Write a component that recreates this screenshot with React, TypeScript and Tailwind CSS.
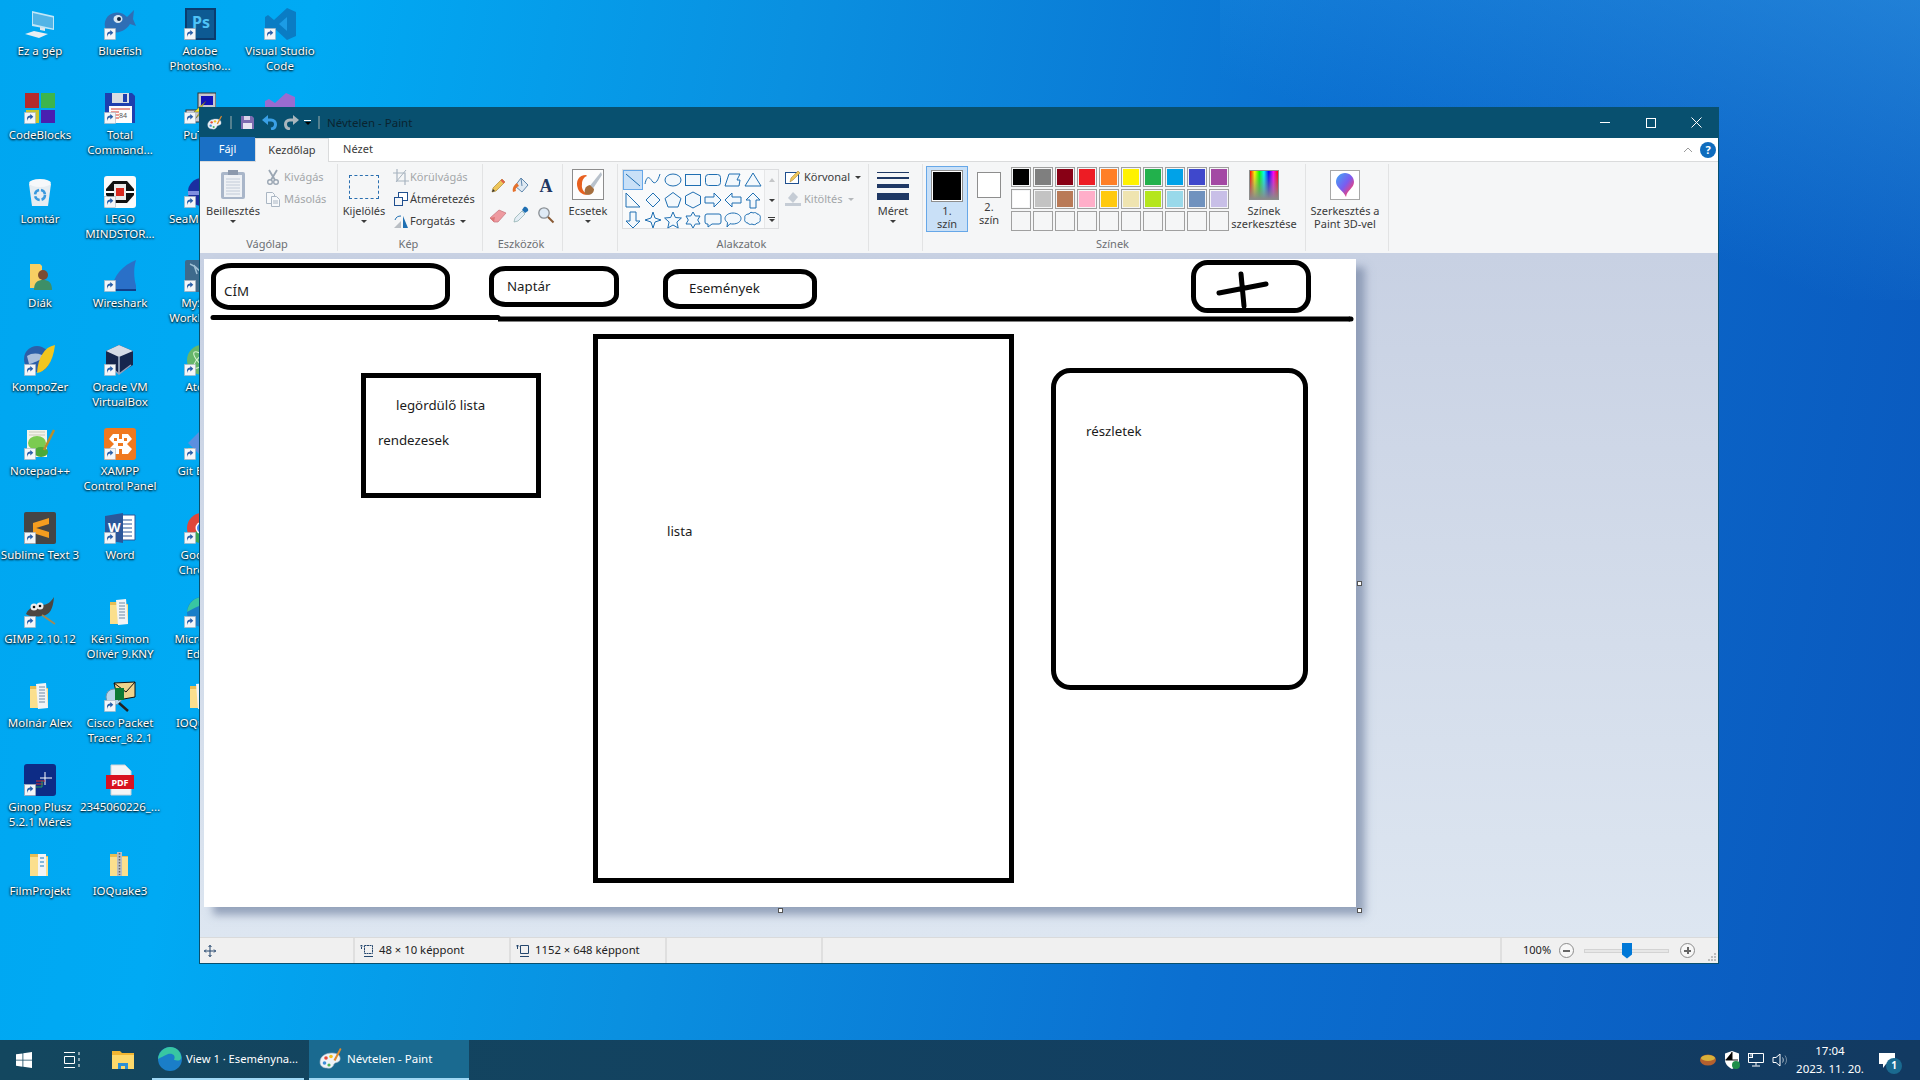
import React from 'react';

const FONT = "font-['Noto_Sans',sans-serif]";

const Shortcut = () => (
  <g>
    <rect x="0.5" y="20.5" width="11" height="11" fill="#f4f6f8" stroke="#aab4c0" strokeWidth="0.6" />
    <path d="M3 29v-2.5c0-2 1.4-3 3.3-3V22l3 2.7-3 2.7v-1.8c-1.5 0-2.5.8-3.3 3.4z" fill="#2a5fa8" />
  </g>
);

const Folder = ({ children }: { children?: React.ReactNode }) => (
  <>
    <path d="M6 6h8l2 2h8v20H6z" fill="#e8bd55" />
    <path d="M6 9h18v19H6z" fill="#fbdf8d" />
    {children}
  </>
);

const desktopArt: Record<string, React.ReactNode> = {
  pc: (
    <>
      <path d="M8 3l22 5v14L8 18z" fill="#bfe6f7" />
      <path d="M9 5l20 4.500v11L9 16z" fill="#52b4e6" />
      <path d="M16 19l5 1v3l-5-1z" fill="#dfe8ee" />
      <path d="M1 26l9-3 14 3-9 4z" fill="#e9eef2" />
    </>
  ),
  bluefish: (
    <>
      <path d="M1 14C3 4 16 1 23 9l7-7-1 9 3 7-6-2c-5 8-14 10-22 8C2 22 0 18 1 14z" fill="#2f6eb5" />
      <ellipse cx="14" cy="11" rx="4.500" ry="4" fill="#d8e6f2" />
      <circle cx="15" cy="11" r="2" fill="#10243c" />
    </>
  ),
  ps: (
    <>
      <rect x="1" y="0" width="31" height="32" fill="#0a3c6e" />
      <rect x="3" y="2" width="27" height="28" fill="#0d5a93" />
      <text x="8" y="20" fontSize="16" fontWeight="700" fill="#4fc3f7" fontFamily="Noto Sans, sans-serif">Ps</text>
    </>
  ),
  vscode: (
    <>
      <path d="M23 0l9 4v24l-9 4-13-12-6 5-3-2V9l3-2 6 5z" fill="#0a7cc4" />
      <path d="M23 9v14l-8-7z" fill="#1c9ce6" />
    </>
  ),
  codeblocks: (
    <>
      <path d="M1 1h14v15H1z" fill="#b52a2a" />
      <path d="M17 1h14v15H17z" fill="#3db54a" />
      <path d="M2 18h13v13H2z" fill="#c9c52f" />
      <path d="M17 18h14v13H17z" fill="#4a1fb0" />
    </>
  ),
  total: (
    <>
      <path d="M1 1h27l3 3v27H1z" fill="#1e3fae" />
      <rect x="8" y="1" width="17" height="10" fill="#d9dde2" />
      <rect x="19" y="2" width="4" height="8" fill="#1e3fae" />
      <rect x="5" y="14" width="23" height="17" fill="#fdfdfd" />
      <path d="M7 17h19M7 20h8M7 23h8M7 26h8" stroke="#d8382f" strokeWidth="1" />
      <text x="15" y="26" fontSize="7" fill="#555" fontFamily="Noto Sans, sans-serif">84</text>
    </>
  ),
  putty: (
    <>
      <rect x="14" y="1" width="18" height="15" fill="#c8c8d0" stroke="#333" />
      <rect x="17" y="4" width="12" height="9" fill="#1313b8" />
      <rect x="2" y="18" width="18" height="12" fill="#c8c8d0" stroke="#333" />
      <path d="M22 9L10 20l6 0-5 7 12-11h-6z" fill="#f6ea1f" stroke="#444" strokeWidth="0.5" />
    </>
  ),
  vs: <path d="M22 1l9 4v22l-9 4-11-10-6 4-4-2V9l4-2 6 4z" fill="#9a6bd0" />,
  bin: (
    <>
      <path d="M5 8l22 0-3 22H8z" fill="#e6edf2" />
      <ellipse cx="16" cy="7" rx="11" ry="4" fill="#f6f8fa" />
      <circle cx="16" cy="19" r="5" fill="none" stroke="#3b9ade" strokeWidth="2.500" strokeDasharray="6 2" />
    </>
  ),
  lego: (
    <>
      <rect x="0" y="0" width="32" height="32" rx="3" fill="#fbfbfb" />
      <path d="M9 5h14l7 8v6l-7 8H9l-7-8v-6z" fill="#111" />
      <path d="M2 15h28v2H2z" fill="#fff" />
      <rect x="10" y="8" width="12" height="16" fill="#e9e9e9" />
      <rect x="12" y="12" width="8" height="8" fill="#d8281e" />
    </>
  ),
  seamonkey: (
    <>
      <circle cx="18" cy="16" r="14" fill="#1b2fa0" />
      <path d="M4 15h28v4H4z" fill="#7f8fe0" />
      <circle cx="22" cy="24" r="6" fill="#3bb0d8" />
    </>
  ),
  student: (
    <>
      <path d="M6 4h10l2 2v22H6z" fill="#f7cf63" />
      <circle cx="19" cy="15" r="5" fill="#7a4c33" />
      <path d="M10 30c0-8 4-10 9-10s9 2 9 10z" fill="#3d8f68" />
    </>
  ),
  wireshark: (
    <>
      <path d="M8 29C9 16 19 5 32 0c-3 10-2 20 1 29z" fill="#2a70c8" />
      <path d="M8 29h24v2H8z" fill="#123f8a" />
    </>
  ),
  workbench: (
    <>
      <rect x="1" y="0" width="31" height="32" rx="2" fill="#3e6a8c" />
      <path d="M6 4c6 2 12 8 18 20M10 5l3 9" stroke="#9fc0d4" strokeWidth="1.500" fill="none" />
    </>
  ),
  kompozer: (
    <>
      <circle cx="13" cy="15" r="13" fill="#2c5fa8" />
      <path d="M3 12c6-4 14-3 20 2-8 1-14 6-18 6z" fill="#a9bfdc" />
      <path d="M31 1C20 3 14 14 13 29c8-1 16-10 18-28z" fill="#f2c61f" />
    </>
  ),
  vbox: (
    <>
      <path d="M15 1l14 6v14l-14 9L2 21V7z" fill="#16264d" />
      <path d="M15 1l14 6-14 6L2 7z" fill="#d5dbe6" />
      <path d="M15 13v17" stroke="#a9b8d0" strokeWidth="1.500" />
      <path d="M4 21l11 9 12-9" fill="none" stroke="#8fa1bd" strokeWidth="1.500" />
    </>
  ),
  atom: (
    <>
      <circle cx="18" cy="16" r="15" fill="#66b66a" />
      <ellipse cx="18" cy="16" rx="11" ry="4" fill="none" stroke="#d6f2d2" transform="rotate(45 18 16)" />
      <ellipse cx="18" cy="16" rx="11" ry="4" fill="none" stroke="#d6f2d2" transform="rotate(-45 18 16)" />
    </>
  ),
  npp: (
    <>
      <path d="M3 2h20v27H3z" fill="#f3f3ea" />
      <path d="M5 4h16M5 7h16" stroke="#c9c9b8" />
      <ellipse cx="13" cy="15" rx="9" ry="7" fill="#7bcb50" />
      <ellipse cx="17" cy="24" rx="7" ry="5" fill="#4ba838" />
      <path d="M30 2l-10 20" stroke="#b98d2d" strokeWidth="2.500" />
    </>
  ),
  xampp: (
    <>
      <rect x="0" y="0" width="32" height="32" rx="3" fill="#f0791f" />
      <path d="M9 6h6v5h3V6h6l4 5-5 5 5 5-4 5h-6v-5h-3v5H9l-4-5 5-5-5-5z" fill="#fff" />
      <rect x="10" y="10" width="3" height="3" fill="#f0791f" />
      <rect x="20" y="10" width="3" height="3" fill="#f0791f" />
      <rect x="14" y="15" width="5" height="3" fill="#f0791f" />
    </>
  ),
  git: (
    <>
      <path d="M18 1l14 14-14 14L4 15z" fill="#5b8fe0" />
      <path d="M24 1l8 8-3 3-8-8z" fill="#e36a4e" />
      <path d="M4 20h6v9H4z" fill="#f2c14e" />
    </>
  ),
  sublime: (
    <>
      <rect x="0" y="0" width="32" height="32" rx="2" fill="#454545" />
      <path d="M25 6v6L9 17v-6z" fill="#f59d1f" />
      <path d="M9 15l16 5v6L9 21z" fill="#f59d1f" />
    </>
  ),
  word: (
    <>
      <path d="M13 3h18v25H13z" fill="#fff" stroke="#2b579a" />
      <path d="M17 8h11M17 12h11M17 16h11M17 20h11M17 24h11" stroke="#2b579a" />
      <path d="M1 4l18-3v30L1 28z" fill="#2b579a" />
      <text x="4" y="20" fontSize="13" fontWeight="700" fill="#fff" fontFamily="Noto Sans, sans-serif">W</text>
    </>
  ),
  chrome: (
    <>
      <circle cx="18" cy="16" r="15" fill="#e0463a" />
      <path d="M18 16L5 24A15 15 0 0 0 18 31z" fill="#3aa757" />
      <path d="M18 16l13-3a15 15 0 0 1-13 18z" fill="#f9c41c" />
      <circle cx="18" cy="16" r="6.500" fill="#fff" />
      <circle cx="18" cy="16" r="5" fill="#4285f4" />
    </>
  ),
  gimp: (
    <>
      <path d="M2 18c3-7 10-9 16-9 5 0 9-3 12-8-1 12-4 18-12 19-6 1-12 1-16-2z" fill="#4c4640" />
      <circle cx="10" cy="11" r="3.500" fill="#ececec" />
      <circle cx="16" cy="10" r="3.500" fill="#ececec" />
      <circle cx="10" cy="11" r="1.300" fill="#111" />
      <circle cx="16" cy="10" r="1.300" fill="#111" />
      <path d="M18 19l13 9" stroke="#a08a58" strokeWidth="2" />
    </>
  ),
  docs: (
    <Folder>
      <path d="M12 4l10-1 2 25-10 1z" fill="#f2f4f6" />
      <path d="M15 7l6 0M15 10l6 0M15 13l6 0M15 16l6 0M15 19l6 0M15 22l6 0" stroke="#6f8aa6" strokeWidth="1.200" />
    </Folder>
  ),
  edge: (
    <>
      <circle cx="18" cy="16" r="15" fill="#1a7ec8" />
      <path d="M3 16C4 6 12 1 18 1c8 0 14 6 14 13 0 4-5 5-9 3 3-6-3-9-8-7-5 2-8 4-12 6z" fill="#38c6a2" />
    </>
  ),
  cisco: (
    <>
      <circle cx="10" cy="17" r="8" fill="#b8d6ea" stroke="#6c93ad" />
      <path d="M15 23l9 8" stroke="#222" strokeWidth="2.500" />
      <path d="M10 3l21-1v15L14 20z" fill="#efd38c" stroke="#111" />
      <path d="M10 3l12 9 9-10" fill="none" stroke="#111" />
      <rect x="11" y="8" width="9" height="12" fill="#0d7a35" />
    </>
  ),
  pdf: (
    <>
      <path d="M7 1h14l6 6v24H7z" fill="#f4f5f6" stroke="#cfd3d7" />
      <rect x="2" y="11" width="28" height="14" fill="#d8121f" />
      <text x="16" y="22" textAnchor="middle" fontSize="9" fontWeight="700" fill="#fff" fontFamily="Noto Sans, sans-serif">PDF</text>
    </>
  ),
  ginop: (
    <>
      <rect x="0" y="0" width="32" height="32" rx="3" fill="#0d2c86" />
      <path d="M21 8v13M16 14h12" stroke="#fff" strokeWidth="1" />
      <path d="M12 17h9M12 20h7" stroke="#d52b2b" />
      <path d="M12 23h6v-6" stroke="#2f9e58" fill="none" />
    </>
  ),
  film: (
    <Folder>
      <path d="M14 6h8v22h-8z" fill="#f2f4f6" />
      <path d="M16 10h4M16 14h4M16 18h4" stroke="#5da2d5" strokeWidth="1.500" />
    </Folder>
  ),
  zip: (
    <Folder>
      <rect x="13" y="4" width="5" height="24" fill="#b9bdc2" />
      <path d="M15.500 5v22" stroke="#666" strokeWidth="1.500" strokeDasharray="1.500 1.500" />
    </Folder>
  ),
};

interface DesktopItem {
  art: string;
  lines: string[];
  shortcut?: boolean;
}

const desktopColumns: DesktopItem[][] = [
  [
    { art: 'pc', lines: ['Ez a gép'] },
    { art: 'codeblocks', lines: ['CodeBlocks'], shortcut: true },
    { art: 'bin', lines: ['Lomtár'] },
    { art: 'student', lines: ['Diák'] },
    { art: 'kompozer', lines: ['KompoZer'], shortcut: true },
    { art: 'npp', lines: ['Notepad++'], shortcut: true },
    { art: 'sublime', lines: ['Sublime Text 3'], shortcut: true },
    { art: 'gimp', lines: ['GIMP 2.10.12'], shortcut: true },
    { art: 'docs', lines: ['Molnár Alex'] },
    { art: 'ginop', lines: ['Ginop Plusz', '5.2.1 Mérés'], shortcut: true },
    { art: 'film', lines: ['FilmProjekt'] },
  ],
  [
    { art: 'bluefish', lines: ['Bluefish'], shortcut: true },
    { art: 'total', lines: ['Total', 'Command...'], shortcut: true },
    { art: 'lego', lines: ['LEGO', 'MINDSTOR...'], shortcut: true },
    { art: 'wireshark', lines: ['Wireshark'], shortcut: true },
    { art: 'vbox', lines: ['Oracle VM', 'VirtualBox'], shortcut: true },
    { art: 'xampp', lines: ['XAMPP', 'Control Panel'], shortcut: true },
    { art: 'word', lines: ['Word'], shortcut: true },
    { art: 'docs', lines: ['Kéri Simon', 'Olivér 9.KNY'] },
    { art: 'cisco', lines: ['Cisco Packet', 'Tracer_8.2.1'], shortcut: true },
    { art: 'pdf', lines: ['2345060226_...'] },
    { art: 'zip', lines: ['IOQuake3'] },
  ],
  [
    { art: 'ps', lines: ['Adobe', 'Photosho...'], shortcut: true },
    { art: 'putty', lines: ['PuTTY'], shortcut: true },
    { art: 'seamonkey', lines: ['SeaMonkey'], shortcut: true },
    { art: 'workbench', lines: ['MySQL', 'Workbench'], shortcut: true },
    { art: 'atom', lines: ['Atom'], shortcut: true },
    { art: 'git', lines: ['Git Bash'], shortcut: true },
    { art: 'chrome', lines: ['Google', 'Chrome'], shortcut: true },
    { art: 'edge', lines: ['Microsoft', 'Edge'], shortcut: true },
    { art: 'docs', lines: ['IOQuake'] },
  ],
  [
    { art: 'vscode', lines: ['Visual Studio', 'Code'], shortcut: true },
    { art: 'vs', lines: ['Visual Studio'], shortcut: true },
  ],
];

const DesktopIcon = ({ art, lines, shortcut }: DesktopItem) => (
  <div className="flex h-[84px] w-[80px] flex-col items-center">
    <svg width="32" height="32" viewBox="0 0 32 32">
      {desktopArt[art]}
      {shortcut && <Shortcut />}
    </svg>
    <div className="mt-[3px] whitespace-nowrap text-center text-[11.5px] leading-[15px] text-white [text-shadow:0_1px_2px_#000,0_0_3px_#000a]">
      {lines.map((line) => (
        <div key={line}>{line}</div>
      ))}
    </div>
  </div>
);

const PaintIcon = ({ size }: { size: number }) => (
  <svg width={size} height={size} viewBox="0 0 24 24">
    <path d="M1 15C1 9 7 6 13 6c6 0 9 3 8 7-1 3-5 2-6 4-1 3-3 5-7 4-4 0-7-2-7-6z" fill="#eef3f7" stroke="#9fb0bf" strokeWidth="0.6" />
    <circle cx="7" cy="11" r="1.800" fill="#e5493a" />
    <circle cx="12" cy="9.500" r="1.800" fill="#f2c11d" />
    <circle cx="5.500" cy="16" r="1.800" fill="#3e8fd8" />
    <circle cx="10" cy="18" r="1.600" fill="#4db05a" />
    <path d="M21 1l1.500 1-6 12-2-1z" fill="#e08a2e" />
  </svg>
);

const Caret = ({ className = 'border-t-[#3b3b3b]' }: { className?: string }) => (
  <span className={`inline-block h-0 w-0 border-x-[3.5px] border-t-[3.5px] border-x-transparent ${className}`} />
);

const RibbonGroup = ({ label, width, children }: { label?: string; width: string; children: React.ReactNode }) => (
  <div className={`my-[2px] flex shrink-0 flex-col border-r border-[#e2e3e4] ${width}`}>
    <div className="flex h-[72px]">{children}</div>
    <div className="h-[15px] pr-[3px] text-center text-[11px] leading-[15px] text-[#6c6f73]">{label}</div>
  </div>
);

const LargeButton = ({ icon, lines, width, caret }: { icon: React.ReactNode; lines: string[]; width: string; caret?: boolean }) => (
  <div className={`flex shrink-0 flex-col items-center pt-[5px] ${width}`}>
    <div className="flex h-[31px] items-center justify-center">{icon}</div>
    <div className="mt-[4px] text-center text-[11px] leading-[13px] text-[#3b3b3b]">
      {lines.map((line) => (
        <div key={line} className="whitespace-nowrap">{line}</div>
      ))}
    </div>
    {caret && (
      <div className="mt-[1px] flex h-[6px] items-center">
        <Caret />
      </div>
    )}
  </div>
);

const SmallButton = ({ icon, label, disabled, caret, tight }: { icon: React.ReactNode; label: string; disabled?: boolean; caret?: boolean; tight?: boolean }) => (
  <div className={`flex h-[22px] items-center whitespace-nowrap text-[11px] ${disabled ? 'text-[#a3a6a9]' : 'text-[#3b3b3b]'}`}>
    <span className="flex w-[16px] items-center justify-center">{icon}</span>
    <span className={tight ? 'ml-[1px]' : 'ml-[3px]'}>{label}</span>
    {caret && (
      <span className="ml-[5px] flex items-center">
        <Caret className={disabled ? 'border-t-[#b5b8bb]' : 'border-t-[#3b3b3b]'} />
      </span>
    )}
  </div>
);

const IconSvg = ({ size = 16, children }: { size?: number; children: React.ReactNode }) => (
  <svg width={size} height={size} viewBox="0 0 16 16" fill="none">
    {children}
  </svg>
);

const toolIcons: React.ReactNode[] = [
  <svg key="pencil" width="17" height="17" viewBox="0 0 17 17"><path d="M2 15l1-4L12 2l3 3-9 9z" fill="#eec65a" stroke="#a07a2a" strokeWidth="0.6" /><path d="M12 2l3 3-1.500 1.500-3-3z" fill="#e0604a" /><path d="M2 15l1-3 2 2z" fill="#333" /></svg>,
  <svg key="fill" width="18" height="18" viewBox="0 0 18 18"><path d="M9 1l7 7-6 7-7-6z" fill="#dfe9f2" stroke="#5f87ad" /><path d="M9 1l1 8" stroke="#5f87ad" /><path d="M5 6C2 8 0 11 1 15l3-1c-1-2 0-4 3-5z" fill="#e5702c" /></svg>,
  <svg key="text" width="18" height="18" viewBox="0 0 18 18"><text x="9" y="15" textAnchor="middle" fontSize="18" fontWeight="700" fill="#1f3864" fontFamily="Liberation Serif, serif">A</text></svg>,
  <svg key="eraser" width="18" height="18" viewBox="0 0 18 18"><path d="M1 12l9-8 7 3-8 9H5z" fill="#ee9aa0" stroke="#c3717a" strokeWidth="0.7" /><path d="M1 12l4 4 1-5z" fill="#d77" /></svg>,
  <svg key="picker" width="18" height="18" viewBox="0 0 18 18"><path d="M2 16l1-4 7-7 3 3-7 7z" fill="#e3edf5" stroke="#8aa" strokeWidth="0.7" /><path d="M10 4l2-3c2-1 5 2 4 4l-3 2z" fill="#1f6fb2" /></svg>,
  <svg key="zoom" width="18" height="18" viewBox="0 0 18 18"><circle cx="7" cy="7" r="5.200" fill="#dfeaf5" stroke="#8a8f94" strokeWidth="1.300" /><path d="M11 11l5.500 5.500" stroke="#8a5a34" strokeWidth="2" /></svg>,
];

const S = ({ children }: { children: React.ReactNode }) => (
  <svg width="18" height="18" viewBox="0 0 18 18" fill="#f3f8fc" stroke="#1f6fb2" strokeWidth="1">{children}</svg>
);

const shapes: React.ReactNode[] = [
  <path d="M2 3l14 12" />,
  <path d="M1 13c2-10 5-6 7-3s5 3 8-7" fill="none" />,
  <ellipse cx="9" cy="9" rx="8" ry="6" />,
  <rect x="1.500" y="3.500" width="15" height="11" />,
  <rect x="1.500" y="3.500" width="15" height="11" rx="3" />,
  <path d="M5 3h11l-3 6h3l-1 6H1z" />,
  <path d="M9 2l8 13H1z" />,
  <path d="M2 2l14 14H2z" />,
  <path d="M9 2l7 7-7 7-7-7z" />,
  <path d="M9 1.500l8 6-3 8.500H4L1 7.500z" />,
  <path d="M9 1l7.500 4v8L9 17l-7.500-4V5z" />,
  <path d="M1 6h9V2l7 7-7 7v-4H1z" />,
  <path d="M17 6H8V2L1 9l7 7v-4h9z" />,
  <path d="M6 17V9H2l7-7 7 7h-4v8z" />,
  <path d="M6 1v9H2l7 7 7-7h-4V1z" />,
  <path d="M9 1l2 6 6 2-6 2-2 6-2-6-6-2 6-2z" />,
  <path d="M9 1l2.400 5.500 6 .5-4.500 4 1.300 6L9 14l-5.200 3 1.300-6L.6 7l6-.5z" />,
  <path d="M9 1l2.300 4H16l-2.300 4L16 13h-4.700L9 17l-2.300-4H2l2.300-4L2 5h4.700z" />,
  <path d="M3 3h12a2 2 0 0 1 2 2v6a2 2 0 0 1-2 2H8l-4 3v-3H3a2 2 0 0 1-2-2V5a2 2 0 0 1 2-2z" />,
  <path d="M9 2c4.500 0 8 2.500 8 5.500S13.500 13 9 13c-1 0-2 0-3-.3L3 16l.5-4.500C2 10.500 1 9 1 7.500 1 4.500 4.500 2 9 2z" />,
  <path d="M5 3c1-2 3-2 4-1 2-1 4 0 4 1 3 0 4 3 3 5 1 2-1 4-3 4-1 2-4 2-5 1-2 1-4 0-4-1-3 0-4-3-3-5-1-2 1-4 4-4z" />,
];

const paletteColors = [
  '#000000', '#7f7f7f', '#880015', '#ed1c24', '#ff7f27', '#fff200', '#22b14c', '#00a2e8', '#3f48cc', '#a349a4',
  '#ffffff', '#c3c3c3', '#b97a57', '#ffaec9', '#ffc90e', '#efe4b0', '#b5e61d', '#99d9ea', '#7092be', '#c8bfe7',
];

const Ribbon = () => (
  <div className="flex h-[91px] shrink-0 bg-[#f5f6f7]">
    <RibbonGroup label="Vágólap" width="w-[138px]">
      <LargeButton
        width="w-[66px]"
        caret
        lines={['Beillesztés']}
        icon={
          <svg width="26" height="31" viewBox="0 0 26 31">
            <rect x="1" y="3" width="24" height="27" rx="2" fill="#a9b6c9" />
            <rect x="4" y="6" width="18" height="22" fill="#eef1f5" />
            <path d="M6 10h14M6 13h14M6 16h14M6 19h14M6 22h14M6 25h14" stroke="#c2cbd8" />
            <path d="M8 1h10v5H8z" fill="#8c99ad" />
          </svg>
        }
      />
      <div className="-ml-[1px] pt-[2px]">
        <SmallButton disabled label="Kivágás" icon={<IconSvg><circle cx="5" cy="13" r="2.300" stroke="#9aa6b3" strokeWidth="1.400" /><circle cx="11" cy="13" r="2.300" stroke="#9aa6b3" strokeWidth="1.400" /><path d="M4 1l6 10M12 1L6 11" stroke="#9aa6b3" strokeWidth="1.800" /></IconSvg>} />
        <SmallButton disabled label="Másolás" icon={<IconSvg><path d="M1.500 1.500h6l2 2v9h-8z" fill="#f7f9fb" stroke="#aab6c3" /><path d="M6.500 5.500h5l3 3v7h-8z" fill="#f7f9fb" stroke="#aab6c3" /><path d="M8 10h5M8 12h5" stroke="#aab6c3" /></IconSvg>} />
      </div>
    </RibbonGroup>

    <RibbonGroup label="Kép" width="w-[145px]">
      <LargeButton
        width="w-[52px]"
        caret
        lines={['Kijelölés']}
        icon={<div className="mt-[4px] h-[24px] w-[30px] border border-dashed border-[#2a6fb0]" />}
      />
      <div className="pt-[2px] pl-[3px]">
        <SmallButton tight disabled label="Körülvágás" icon={<IconSvg><path d="M4 0v12h12M0 4h12v12" stroke="#a8b4c0" strokeWidth="1.200" /><path d="M13 1L3 13" stroke="#a8b4c0" /></IconSvg>} />
        <SmallButton tight label="Átméretezés" icon={<IconSvg><rect x="5.500" y="1.500" width="9" height="8" fill="#fff" stroke="#1f4f8f" /><rect x="1.500" y="6.500" width="8" height="8" fill="#f5f6f7" stroke="#1f4f8f" /></IconSvg>} />
        <SmallButton tight label="Forgatás" caret icon={<IconSvg><path d="M1 15l7-7v7z" fill="#b9bec4" /><path d="M10 3v12h5z" fill="#1f6fb2" /><path d="M2 7c1-3 3-4 6-4" stroke="#1f6fb2" /></IconSvg>} />
      </div>
    </RibbonGroup>

    <RibbonGroup label="Eszközök" width="w-[80px]">
      <div className="grid grid-cols-[22px_24px_26px] grid-rows-[29px_29px] pt-[7px] pl-[4px]">
        {toolIcons.map((icon, i) => (
          <div key={i} className="flex items-center justify-center">{icon}</div>
        ))}
      </div>
    </RibbonGroup>

    <RibbonGroup width="w-[55px]">
      <LargeButton
        width="w-[50px]"
        caret
        lines={['Ecsetek']}
        icon={
          <svg width="32" height="31" viewBox="0 0 32 31">
            <rect x="0.500" y="0.500" width="31" height="30" fill="#fdfdfd" stroke="#8d8d8d" />
            <path d="M14 6C7 6 3 12 6 20c2 5 8 7 12 5-5 0-9-4-8-10 0-4 2-7 5-8z" fill="#e8601f" />
            <path d="M29 3L17 18l3 3L30 6z" fill="#b9c2cc" />
            <path d="M18 16c-5 1-6 5-5 9 4 2 9 0 9-5z" fill="#a56f3f" />
          </svg>
        }
      />
    </RibbonGroup>

    <RibbonGroup label="Alakzatok" width="w-[251px]">
      <div className="ml-[4px] mt-[5px] flex h-[60px] w-[157px] border border-[#dcdddf]">
        <div className="grid w-[141px] grid-cols-[repeat(7,20px)] grid-rows-[repeat(3,20px)] bg-[#f9fafb]">
          {shapes.map((shape, i) => (
            <div key={i} className={`flex items-center justify-center ${i === 0 ? 'border border-[#66a7e8] bg-[#c9e0f7]' : ''}`}>
              <S>{shape}</S>
            </div>
          ))}
        </div>
        <div className="flex flex-1 flex-col items-center border-l border-[#e6e7e8]">
          <div className="flex h-[20px] items-center"><span className="h-0 w-0 border-x-[3.5px] border-b-[4px] border-x-transparent border-b-[#c4c6c8]" /></div>
          <div className="flex h-[20px] items-center"><Caret /></div>
          <div className="flex h-[18px] flex-col items-center justify-center gap-[1px]">
            <span className="h-px w-[7px] bg-[#3b3b3b]" />
            <Caret />
          </div>
        </div>
      </div>
      <div className="ml-[6px] pt-[2px]">
        <SmallButton label="Körvonal" caret icon={<IconSvg><rect x="0.500" y="3.500" width="13" height="11" fill="#fff" stroke="#1f4f8f" /><path d="M5 13l1-4 7-7 2 2-7 7z" fill="#eec65a" stroke="#a07a2a" strokeWidth="0.500" /></IconSvg>} />
        <SmallButton disabled label="Kitöltés" caret icon={<IconSvg><path d="M8 1l5 5-5 6-5-5z" fill="#c5ccd5" /><rect x="0" y="12" width="16" height="3" fill="#c5ccd5" /></IconSvg>} />
      </div>
    </RibbonGroup>

    <RibbonGroup width="w-[54px]">
      <LargeButton
        width="w-[48px]"
        caret
        lines={['Méret']}
        icon={
          <div className="mt-[2px] flex w-[32px] flex-col">
            <span className="h-px bg-[#1f3864]" />
            <span className="mt-[4px] h-[2px] bg-[#1f3864]" />
            <span className="mt-[5px] h-[4px] bg-[#1f3864]" />
            <span className="mt-[5px] h-[7px] bg-[#1f3864]" />
          </div>
        }
      />
    </RibbonGroup>

    <RibbonGroup label="Színek" width="w-[383px]">
      <div className="ml-[3px] mt-[2px] flex h-[66px] w-[42px] flex-col items-center border border-[#66a7e8] bg-[#c9e0f7] pt-[3px]">
        <div className="h-[32px] w-[32px] border-2 border-[#8e8e8e] bg-black outline outline-1 -outline-offset-2 outline-white" />
        <div className="mt-[2px] text-center text-[11px] leading-[13px] text-[#3b3b3b]">1.<br />szín</div>
      </div>
      <div className="mt-[2px] flex h-[66px] w-[42px] flex-col items-center pt-[6px]">
        <div className="h-[26px] w-[24px] border border-[#8e8e8e] bg-white" />
        <div className="mt-[2px] text-center text-[11px] leading-[13px] text-[#3b3b3b]">2.<br />szín</div>
      </div>
      <div className="ml-[1px] mt-[3px] grid grid-cols-[repeat(10,22px)] grid-rows-[repeat(3,22px)]">
        {Array.from({ length: 30 }).map((_, i) => {
          const color = paletteColors[i];
          return color ? (
            <div key={i} className="h-[20px] w-[20px] border border-[#a0a0a0] p-px">
              <div className="h-full w-full" style={{ backgroundColor: color }} />
            </div>
          ) : (
            <div key={i} className="h-[20px] w-[20px] border border-[#a0a0a0]" />
          );
        })}
      </div>
      <LargeButton
        width="w-[66px]"
        lines={['Színek', 'szerkesztése']}
        icon={<div className="h-[30px] w-[30px] border border-[#8d8d8d] bg-[linear-gradient(to_bottom,transparent,#8a8a8a),linear-gradient(to_right,#f00,#ff0,#0f0,#0ff,#00f,#f0f,#f00)]" />}
      />
    </RibbonGroup>

    <RibbonGroup width="w-[83px]">
      <LargeButton
        width="w-[78px]"
        lines={['Szerkesztés a', 'Paint 3D-vel']}
        icon={
          <div className="flex h-[30px] w-[30px] items-center justify-center border border-[#a8a8a8] bg-white">
            <svg width="20" height="26" viewBox="0 0 20 26">
              <defs>
                <linearGradient id="p3d" x1="0" y1="0" x2="1" y2="1">
                  <stop offset="0" stopColor="#3fa9f5" />
                  <stop offset="0.5" stopColor="#7a5cf0" />
                  <stop offset="0.8" stopColor="#f0407a" />
                  <stop offset="1" stopColor="#f9a21b" />
                </linearGradient>
              </defs>
              <path d="M10 1c5 0 9 4 9 9 0 6-7 8-8 15C9 19 1 16 1 10c0-5 4-9 9-9z" fill="url(#p3d)" />
            </svg>
          </div>
        }
      />
    </RibbonGroup>
  </div>
);

const Sketch = () => (
  <div className="relative h-[648px] w-[1152px] bg-white text-[13.3px] text-[#1b1b1b] shadow-[9px_8px_8px_rgba(120,135,165,0.7)]">
    <svg width="1152" height="648" viewBox="204 259 1152 648" fill="none" stroke="#000" strokeWidth="5">
      <rect x="213.500" y="265.500" width="234" height="42" rx="18" ry="12" />
      <rect x="491.500" y="268.500" width="125" height="36" rx="14" ry="10" />
      <rect x="665.500" y="271.500" width="149" height="35" rx="14" ry="10" />
      <rect x="1193.500" y="262.500" width="115" height="48" rx="14" />
      <path d="M1219 293l47-9M1241 274l3 32" strokeLinecap="round" />
      <path d="M213 317.500h285" strokeLinecap="round" />
      <path d="M498 319h852" strokeLinecap="butt" />
      <path d="M1350 319h1" strokeLinecap="round" />
      <rect x="363.500" y="375.500" width="175" height="120" shapeRendering="crispEdges" />
      <rect x="595.500" y="336.500" width="416" height="544" shapeRendering="crispEdges" />
      <rect x="1053.500" y="370.500" width="252" height="317" rx="17" />
    </svg>
    <span className="absolute left-[20px] top-[22px] leading-5">CÍM</span>
    <span className="absolute left-[303px] top-[17px] leading-5">Naptár</span>
    <span className="absolute left-[485px] top-[19px] leading-5">Események</span>
    <span className="absolute left-[192px] top-[136px] leading-5">legördülő lista</span>
    <span className="absolute left-[174px] top-[171px] leading-5">rendezesek</span>
    <span className="absolute left-[463px] top-[262px] leading-5">lista</span>
    <span className="absolute left-[882px] top-[162px] leading-5">részletek</span>
    <span className="absolute left-[1153px] top-[322px] h-[5px] w-[5px] border border-[#555] bg-white" />
    <span className="absolute left-[574px] top-[649px] h-[5px] w-[5px] border border-[#555] bg-white" />
    <span className="absolute left-[1153px] top-[649px] h-[5px] w-[5px] border border-[#555] bg-white" />
  </div>
);

const StatusBar = () => (
  <div className="flex h-[26px] shrink-0 items-center border-t border-[#d9dadb] bg-[#f0f0f0] text-[11.3px] text-[#222]">
    <div className="flex h-full w-[155px] items-center border-r-2 border-[#dfdfdf] pl-[4px]">
      <svg width="12" height="12" viewBox="0 0 12 12" fill="none" stroke="#24476e"><path d="M6 0v12M0 6h12M4.500 2L6 .5 7.500 2M4.500 10L6 11.500 7.500 10M2 4.500L.5 6 2 7.500M10 4.500L11.500 6 10 7.500" /></svg>
    </div>
    <div className="flex h-full w-[156px] items-center border-r-2 border-[#dfdfdf] pl-[5px]">
      <svg width="14" height="14" viewBox="0 0 14 14" fill="none" stroke="#24476e"><path d="M1.500 5V1M0 2.500L1.500 1 3 2.500M4.500 1.500h8v8h-8z" strokeDasharray="2 0.500" /><path d="M4 12.500h9" /></svg>
      <span className="ml-[5px]">48 × 10 képpont</span>
    </div>
    <div className="flex h-full w-[156px] items-center border-r-2 border-[#dfdfdf] pl-[5px]">
      <svg width="14" height="14" viewBox="0 0 14 14" fill="none" stroke="#24476e"><path d="M1.500 5V1M0 2.500L1.500 1 3 2.500M4.500 1.500h8v8h-8zM4 12.500h9" /></svg>
      <span className="ml-[5px]">1152 × 648 képpont</span>
    </div>
    <div className="h-full w-[156px] border-r-2 border-[#dfdfdf]" />
    <div className="h-full flex-1 border-r-2 border-[#dfdfdf]" />
    <div className="relative flex h-full w-[216px] items-center pl-[21px]">
      <span className="w-[28px] text-[11px]">100%</span>
      <span className="ml-[8px] flex h-[15px] w-[15px] items-center justify-center rounded-full border border-[#8c8c8c] bg-[#f7f7f7]">
        <span className="h-[2px] w-[7px] bg-[#666]" />
      </span>
      <div className="relative ml-[10px] h-[4px] w-[85px] border border-[#d3d3d3] bg-[#e7e7e7]">
        <span className="absolute left-[37px] top-[-7px] h-[16px] w-[10px] bg-[#0078d7] [clip-path:polygon(0_0,100%_0,100%_75%,50%_100%,0_75%)]" />
      </div>
      <span className="relative ml-[11px] flex h-[15px] w-[15px] items-center justify-center rounded-full border border-[#8c8c8c] bg-[#f7f7f7]">
        <span className="h-[2px] w-[7px] bg-[#666]" />
        <span className="absolute h-[7px] w-[2px] bg-[#666]" />
      </span>
      <span className="absolute bottom-[2px] right-[2px] grid grid-cols-3 gap-px">
        {[0, 0, 1, 0, 1, 1, 1, 1, 1].map((on, i) => (
          <span key={i} className={`h-[2px] w-[2px] ${on ? 'bg-[#bdbdbd]' : ''}`} />
        ))}
      </span>
    </div>
  </div>
);

const PaintWindow = () => (
  <div className={`absolute left-[199px] top-[107px] flex h-[857px] w-[1520px] flex-col border-x border-b border-[#08506f] ${FONT}`}>
    <div className="flex h-[31px] shrink-0 items-center bg-[#08506f] text-[11.5px] text-[#0a2430]">
      <span className="ml-[7px]"><PaintIcon size={16} /></span>
      <span className="ml-[7px] h-[13px] w-[2px] bg-[#54808f]" />
      <span className="ml-[8px]">
        <svg width="15" height="15" viewBox="0 0 15 15"><path d="M1 1h11l2 2v11H1z" fill="#7c6bb0" /><rect x="4" y="1" width="6" height="4" fill="#d8d3ea" /><rect x="3" y="8" width="9" height="6" fill="#e8e5f2" /></svg>
      </span>
      <span className="ml-[7px]">
        <svg width="15" height="15" viewBox="0 0 15 15" fill="none"><path d="M3 5h6c6 0 6 8 0 9" stroke="#3aa0e6" strokeWidth="3" /><path d="M6 0L0 5l6 5z" fill="#3aa0e6" /></svg>
      </span>
      <span className="ml-[7px]">
        <svg width="15" height="15" viewBox="0 0 15 15" fill="none"><path d="M12 5H6c-6 0-6 8 0 9" stroke="#aab6bd" strokeWidth="3" /><path d="M9 0l6 5-6 5z" fill="#aab6bd" /></svg>
      </span>
      <span className="ml-[5px] flex flex-col items-center gap-px">
        <span className="h-px w-[7px] bg-white" />
        <Caret className="border-t-black" />
      </span>
      <span className="ml-[7px] h-[13px] w-[2px] bg-[#54808f]" />
      <span className="ml-[7px]">Névtelen - Paint</span>
      <div className="ml-auto flex text-white">
        <span className="flex h-[31px] w-[46px] items-center justify-center"><span className="h-px w-[10px] bg-white" /></span>
        <span className="flex h-[31px] w-[46px] items-center justify-center"><span className="h-[10px] w-[10px] border border-white" /></span>
        <span className="flex h-[31px] w-[44px] items-center justify-center">
          <svg width="11" height="11" viewBox="0 0 11 11" stroke="#fff"><path d="M.5.5l10 10M10.500.5l-10 10" /></svg>
        </span>
      </div>
    </div>

    <div className="flex h-[24px] shrink-0 items-end border-b border-[#dadbdc] bg-white text-[11px]">
      <div className="flex h-[24px] w-[55px] items-center justify-center bg-[#1a70c5] text-white">Fájl</div>
      <div className="relative -mb-px flex h-[24px] w-[74px] items-center justify-center border-x border-t border-[#dadbdc] bg-[#f5f6f7] text-[#3b3b3b]">Kezdőlap</div>
      <div className="flex h-[24px] w-[58px] items-center justify-center text-[#3b3b3b]">Nézet</div>
      <div className="ml-auto flex h-full items-center pr-[2px]">
        <svg width="10" height="6" viewBox="0 0 10 6" fill="none" stroke="#9a9a9a"><path d="M1 5l4-4 4 4" /></svg>
        <span className="ml-[7px] flex h-[16px] w-[16px] items-center justify-center rounded-full bg-[#0f6cbd] text-[11px] font-bold leading-none text-white">?</span>
      </div>
    </div>

    <Ribbon />

    <div className="min-h-0 flex-1 bg-[linear-gradient(to_bottom,#c8d1e3,#dde6f1)] pl-[4px] pt-[6px]">
      <Sketch />
    </div>

    <StatusBar />
  </div>
);

const Taskbar = () => (
  <div className={`flex h-[40px] shrink-0 items-center bg-[linear-gradient(to_right,#13475f,#123a62)] text-[11.5px] text-white ${FONT}`}>
    <span className="ml-[16px]">
      <svg width="16" height="16" viewBox="0 0 16 16" fill="#fff"><path d="M0 2.300l6.500-.9v6.300H0zM7.300 1.300L16 0v7.700H7.300zM0 8.500h6.500v6.200L0 13.800zM7.300 8.500H16V16l-8.700-1.200z" /></svg>
    </span>
    <span className="ml-[32px]">
      <svg width="17" height="16" viewBox="0 0 17 16" fill="none" stroke="#fff"><path d="M0 .5h11M0 15.500h11M.5 4.500h10v7H.5zM15 0v3M15 6v3M15 12v3" /></svg>
    </span>
    <span className="ml-[31px]">
      <svg width="22" height="18" viewBox="0 0 22 18"><path d="M0 0h8l2 2h12v16H0z" fill="#f2b632" /><path d="M0 4h22v14H0z" fill="#fdd96b" /><path d="M6 18v-6h10v6h-3v-3H9v3z" fill="#2b8fd6" /></svg>
    </span>
    <div className="ml-[18px] flex h-full w-[152px] items-center border-b-2 border-[#9fd8f5] pl-[6px]">
      <svg width="24" height="24" viewBox="3 1 30 30">{desktopArt.edge}</svg>
      <span className="ml-[4px] whitespace-nowrap text-[11.2px]">View 1 · Eseményna...</span>
    </div>
    <div className="ml-[5px] flex h-full w-[160px] items-center border-b-2 border-[#9fd8f5] bg-[#1a6a90] pl-[10px]">
      <PaintIcon size={24} />
      <span className="ml-[4px]">Névtelen - Paint</span>
    </div>
    <div className="ml-auto flex h-full items-center">
      <svg width="16" height="12" viewBox="0 0 16 12"><ellipse cx="8" cy="6" rx="8" ry="5.500" fill="#b4602e" /><ellipse cx="8" cy="4" rx="7" ry="3" fill="#d8b13a" /></svg>
      <svg className="ml-[8px]" width="16" height="18" viewBox="0 0 16 18"><path d="M8 0l7 2.500V9c0 4-3 7-7 9-4-2-7-5-7-9V2.500z" fill="#fff" /><path d="M8 1v8H1.500M8 9h6" stroke="#111" /><circle cx="12" cy="14" r="4" fill="#1e8e4a" /></svg>
      <svg className="ml-[8px]" width="16" height="14" viewBox="0 0 16 14" fill="none" stroke="#fff"><path d="M4.500.5h11v9H.5v-9h4M3 3.500v-3M8 9.500v3M4 13h8" /><rect x="0.500" y="0.500" width="4" height="4" /></svg>
      <svg className="ml-[8px]" width="16" height="14" viewBox="0 0 16 14" fill="none" stroke="#fff"><path d="M1 4.500h3L8 1v12L4 9.500H1z" /><path d="M10.500 4.500c1 1.500 1 3.500 0 5" strokeOpacity="0.7" /><path d="M13 2.500c2 3 2 6 0 9" strokeOpacity="0.4" /></svg>
      <div className="ml-[2px] w-[80px] text-center text-[11.5px] leading-[18px]">
        <div>17:04</div>
        <div>2023. 11. 20.</div>
      </div>
      <div className="relative ml-[9px] mr-[25px] h-[15px] w-[16px]">
        <svg width="16" height="15" viewBox="0 0 16 15" fill="#fff"><path d="M0 0h16v11H7l-3 4v-4H0z" /></svg>
        <span className="absolute left-[7px] top-[5px] flex h-[16px] w-[16px] items-center justify-center rounded-full bg-[#1a6a90] text-[10px] font-bold text-white">1</span>
      </div>
    </div>
  </div>
);

export default function App() {
  return (
    <div className="flex h-screen w-screen flex-col overflow-hidden">
      <div className={`relative min-h-0 flex-1 overflow-hidden bg-[linear-gradient(100deg,#00a6f0_0%,#00aaf4_15%,#0a90e0_38%,#0b6fd0_65%,#0a58bd_100%)] ${FONT}`}>
        <div className="absolute right-0 top-0 h-[300px] w-[700px] bg-[linear-gradient(200deg,rgba(60,170,240,0.45),transparent_60%)]" />
        <div className="relative flex pt-[8px]">
          {desktopColumns.map((column, i) => (
            <div key={i} className="flex w-[80px] flex-col">
              {column.map((item) => (
                <DesktopIcon key={item.lines.join()} {...item} />
              ))}
            </div>
          ))}
        </div>
        <PaintWindow />
      </div>
      <Taskbar />
    </div>
  );
}
